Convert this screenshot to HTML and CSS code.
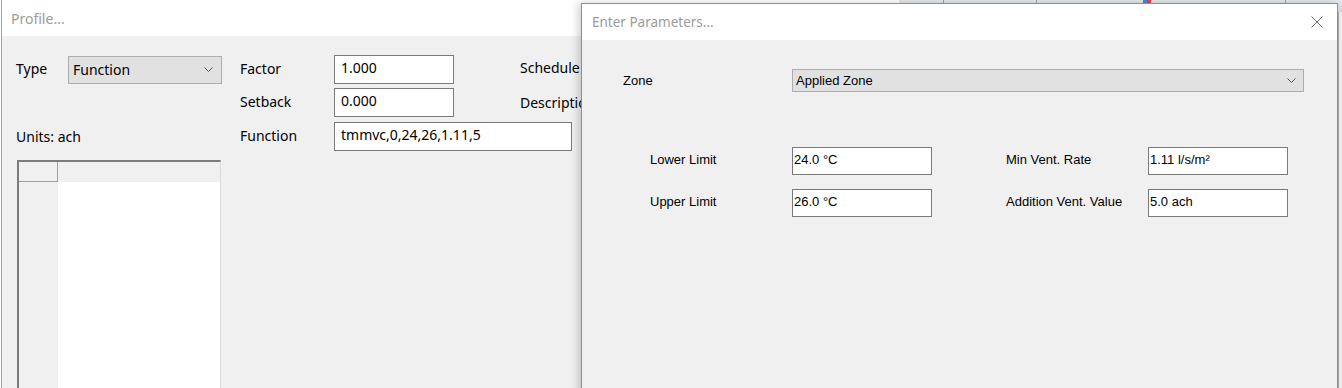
FILE: index.html
```html
<!DOCTYPE html>
<html lang="en">
<head>
    <meta charset="UTF-8">
    <title>Enter Parameters</title>
    <link rel="stylesheet" href="styles.css">
</head>
<body>
<div class="desktop">
    <div class="appbar">
        <span class="bar-cell w44"></span>
        <span class="bar-cell w92"></span>
        <span class="bar-cell w248"><span class="bar-icon"></span></span>
        <span class="bar-cell"></span>
    </div>
    <div class="app-edge"></div>

    <section class="window profile">
        <div class="titlebar">Profile...</div>
        <div class="content">
            <div class="col col-type">
                <div class="field-row">
                    <span class="type-label">Type</span>
                    <div class="combo combo-type">
                        <span>Function</span>
                        <svg class="chevron" width="9" height="5" viewBox="0 0 9 5"><polyline points="0.5,0.5 4.5,4.5 8.5,0.5" fill="none" stroke="#555" stroke-width="1"/></svg>
                    </div>
                </div>
                <div class="units">Units: ach</div>
                <div class="grid-view">
                    <div class="corner"></div>
                    <div class="col-head"></div>
                    <div class="row-head"></div>
                    <div class="cells"></div>
                </div>
            </div>

            <div class="col col-values">
                <div class="field-row">
                    <span class="value-label">Factor</span>
                    <div class="text-box">1.000</div>
                </div>
                <div class="field-row">
                    <span class="value-label">Setback</span>
                    <div class="text-box">0.000</div>
                </div>
                <div class="field-row fn-row">
                    <span class="value-label">Function</span>
                    <div class="text-box wide">tmmvc,0,24,26,1.11,5</div>
                </div>
            </div>

            <div class="col col-meta">
                <div class="field-row"><span class="meta-label">Schedule</span></div>
                <div class="field-row"><span class="meta-label">Description</span></div>
            </div>
        </div>
    </section>

    <section class="window params-dialog">
        <div class="titlebar">
            <span>Enter Parameters...</span>
            <svg class="close" width="12" height="12" viewBox="0 0 12 12"><path d="M0.5 0.5 L11.5 11.5 M11.5 0.5 L0.5 11.5" stroke="#707070" stroke-width="1" fill="none"/></svg>
        </div>
        <div class="content">
            <div class="zone-row">
                <span class="zone-label">Zone</span>
                <div class="combo combo-zone">
                    <span>Applied Zone</span>
                    <svg class="chevron" width="9" height="5" viewBox="0 0 9 5"><polyline points="0.5,0.5 4.5,4.5 8.5,0.5" fill="none" stroke="#555" stroke-width="1"/></svg>
                </div>
            </div>

            <div class="params">
                <span class="param-label">Lower Limit</span>
                <div class="param-box">24.0 °C</div>
                <span class="param-label">Min Vent. Rate</span>
                <div class="param-box">1.11 l/s/m²</div>

                <span class="param-label">Upper Limit</span>
                <div class="param-box">26.0 °C</div>
                <span class="param-label">Addition Vent. Value</span>
                <div class="param-box">5.0 ach</div>
            </div>
        </div>
    </section>
</div>
</body>
</html>
```

FILE: styles.css
```css
body {
    margin: 0;
    width: 1342px;
    height: 388px;
    overflow: hidden;
    background-color: #ffffff;
    font-family: "Segoe UI", "Noto Sans", sans-serif;
    color: #000000;
}

.desktop {
    position: relative;
    width: 1342px;
    height: 388px;
    overflow: hidden;
}

/* application behind the dialogs */
.appbar {
    position: absolute;
    left: 898px;
    top: 0;
    width: 444px;
    height: 12px;
    display: flex;
    background: linear-gradient(#e6e9ed, #d3d7dd);
    border-bottom: 1px solid #b8bdc4;
}

.bar-cell {
    flex: none;
    border-left: 1px solid #9ca2aa;
    position: relative;
}

.bar-cell:last-child {
    flex: 1;
}

.w44 { width: 44px; }
.w92 { width: 92px; }
.w248 { width: 248px; }

.bar-icon {
    position: absolute;
    left: 106px;
    top: 0;
    width: 8px;
    height: 3px;
    background: linear-gradient(90deg, #4f86d8 50%, #e0474c 50%);
}

.app-edge {
    position: absolute;
    left: 1338px;
    top: 12px;
    width: 4px;
    height: 376px;
    border-left: 1px solid #a9a9a9;
    background-color: #efefef;
}

/* windows */
.window {
    position: absolute;
    background-color: #f0f0f0;
}

.titlebar {
    height: 36px;
    background-color: #ffffff;
    color: #9b9b9b;
    font-size: 14px;
    line-height: 38px;
    padding-left: 9px;
}

.profile {
    left: 1px;
    top: 0;
    width: 897px;
    height: 420px;
    border-left: 1px solid #a3a3a3;
    font-size: 14px;
}

.profile .content {
    display: flex;
    padding: 19px 0 0 14px;
}

.col {
    flex: none;
    display: flex;
    flex-direction: column;
}

.field-row {
    display: flex;
    align-items: center;
    height: 29px;
}

.col-type {
    width: 224px;
}

.type-label {
    width: 52px;
    padding-bottom: 3px;
}

.combo {
    display: flex;
    align-items: center;
    justify-content: space-between;
    box-sizing: border-box;
    background-color: #e1e1e1;
    border: 1px solid #adadad;
}

.combo-type {
    width: 154px;
    height: 28px;
    padding: 0 8px 0 4px;
}

.units {
    margin-top: 43px;
    line-height: 20px;
}

.grid-view {
    margin: 13px 0 0 1px;
    width: 204px;
    height: 240px;
    box-sizing: border-box;
    border-top: 2px solid #7c7c7c;
    border-left: 2px solid #7c7c7c;
    border-right: 1px solid #dcdcdc;
    display: grid;
    grid-template-columns: 39px 1fr;
    grid-template-rows: 20px 1fr;
}

.corner {
    background-color: #f0f0f0;
    border-right: 1px solid #a0a0a0;
    border-bottom: 1px solid #a0a0a0;
}

.col-head,
.row-head {
    background-color: #f0f0f0;
}

.cells {
    background-color: #ffffff;
}

.col-values {
    width: 280px;
    gap: 4px;
}

.value-label {
    width: 94px;
    flex: none;
    padding-bottom: 3px;
}

.text-box {
    flex: none;
    box-sizing: border-box;
    width: 120px;
    height: 29px;
    padding-left: 6px;
    line-height: 24px;
    background-color: #ffffff;
    border: 1px solid #7a7a7a;
    white-space: nowrap;
}

.text-box.wide {
    width: 238px;
}

.fn-row {
    margin-top: 1px;
}

.col-meta {
    gap: 6px;
    white-space: nowrap;
}

.meta-label {
    padding-bottom: 4px;
}

/* parameters dialog */
.params-dialog {
    left: 581px;
    top: 3px;
    width: 755px;
    height: 420px;
    border: 1px solid #8f8f8f;
    box-shadow: -3px 0 8px rgba(0, 0, 0, 0.18);
}

.params-dialog .titlebar {
    display: flex;
    align-items: center;
    justify-content: space-between;
    padding: 0 14px 0 10px;
    font-size: 13.5px;
    line-height: normal;
}

.params-dialog .content {
    padding: 29px 0 0 41px;
    font-family: "Liberation Sans", Arial, sans-serif;
    font-size: 13px;
}

.zone-row {
    display: flex;
    align-items: center;
}

.zone-label {
    width: 169px;
}

.combo-zone {
    width: 512px;
    height: 23px;
    padding: 0 7px 0 3px;
}

.params {
    display: grid;
    grid-template-columns: 142px 214px 142px 140px;
    grid-auto-rows: 28px;
    row-gap: 14px;
    align-items: center;
    margin: 55px 0 0 27px;
}

.param-label {
    padding-bottom: 3px;
}

.param-box {
    box-sizing: border-box;
    width: 140px;
    height: 28px;
    padding: 0 0 4px 1px;
    display: flex;
    align-items: center;
    background-color: #ffffff;
    border: 1px solid #7a7a7a;
}
```
